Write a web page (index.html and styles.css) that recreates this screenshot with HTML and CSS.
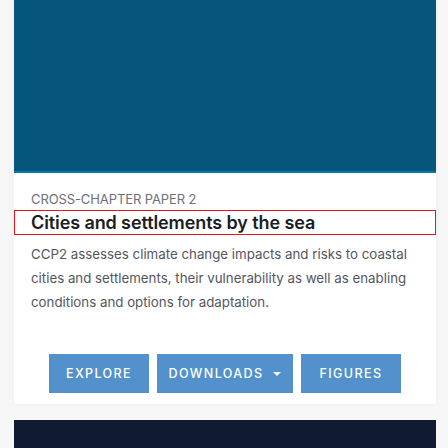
FILE: index.html
```html
<!DOCTYPE html>
<html>
<head>
<meta charset="utf-8">
<link rel="stylesheet" href="styles.css">
</head>
<body>
<div class="page">
  <div class="card">
    <div class="hero"></div>
    <div class="body">
      <div class="label">CROSS-CHAPTER PAPER 2</div>
      <h2 class="title">Cities and settlements by the sea</h2>
      <p class="desc">CCP2 assesses climate change impacts and risks to coastal cities and settlements, their vulnerability as well as enabling conditions and options for adaptation.</p>
      <div class="actions">
        <a class="btn btn-explore">EXPLORE</a>
        <a class="btn btn-dl">DOWNLOADS <span class="caret"></span></a>
        <a class="btn btn-fig">FIGURES</a>
      </div>
    </div>
  </div>
  <div class="next"></div>
</div>
</body>
</html>
```
FILE: styles.css
```css
html, body {
  margin: 0;
  padding: 0;
  background: #f7f7f8;
  font-family: Inter, "Liberation Sans", Arial, sans-serif;
}
.page {
  padding: 0 12px 0 14px;
  display: flex;
  flex-direction: column;
  gap: 16px;
  height: 448px;
  overflow: hidden;
}
.card {
  flex-shrink: 0;
  background: #ffffff;
  border-radius: 0 0 3px 3px;
  box-shadow: 0 0 6px rgba(0,0,0,0.05);
}
.hero {
  height: 171px;
  background: #06557a;
  border-bottom: 2px solid #0a76a8;
}
.body {
  padding: 18px 0 11px 0;
}
.label {
  padding-left: 17px;
  font-size: 13px;
  line-height: 16px;
  color: #6e6f78;
  letter-spacing: -0.1px;
}
.title {
  margin: 3px 0 0 0;
  border: 1px solid #e8141b;
  padding: 1px 16px 0 16px;
  font-size: 18px;
  line-height: 22px;
  font-weight: 600;
  color: #1b1d24;
  letter-spacing: -0.1px;
}
.desc {
  margin: 7px 0 0 0;
  padding: 0 17px;
  font-size: 13.3px;
  line-height: 24px;
  color: #55555f;
}
.actions {
  margin-top: 40px;
  display: flex;
  justify-content: center;
  gap: 8px;
}
.btn {
  background: #5291cc;
  color: #fff;
  height: 39px;
  display: flex;
  align-items: center;
  justify-content: center;
  font-size: 12.5px;
  letter-spacing: 1.4px;
  font-weight: 500;
}
.btn-explore, .btn-fig { width: 100px; }
.btn-dl { width: 136px; }
.caret {
  display: inline-block;
  width: 0; height: 0;
  border-left: 4px solid transparent;
  border-right: 4px solid transparent;
  border-top: 4px solid #fff;
  margin-left: 10px;
}
.next {
  height: 40px;
  flex-shrink: 0;
  background: #111a33;
}
```
